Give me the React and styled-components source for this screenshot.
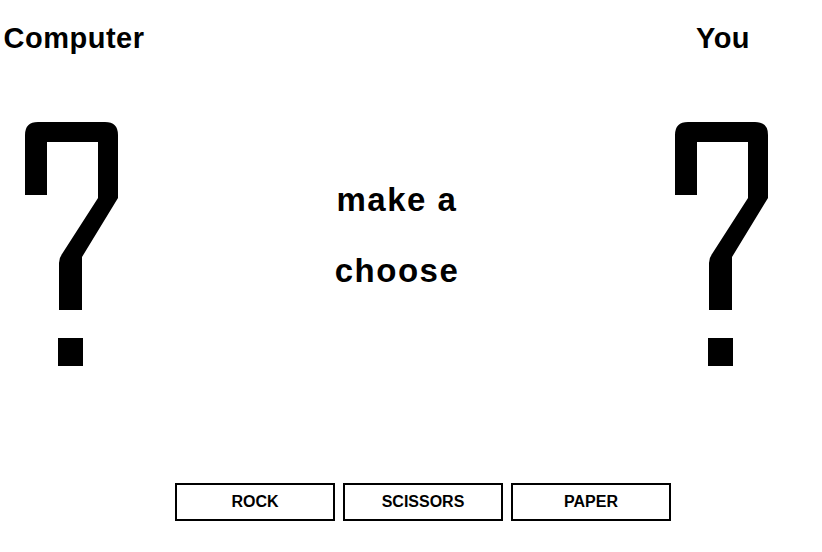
import React from 'react'
import styled, { createGlobalStyle } from 'styled-components'

const GlobalStyle = createGlobalStyle`
    body {
        margin: 0;
        background: #fff;
        color: #000;
        font-family: "Liberation Sans", Arial, sans-serif;
    }
`
const Page = styled.div`
    width: 822px;
    height: 552px;
    overflow: hidden;
`
const Board = styled.div`
    display: grid;
    grid-template-columns: 144px 506px 144px;
    align-items: start;
`
const Player = styled.div`
    display: flex;
    flex-direction: column;
    align-items: center;
    padding-top: 24px;
`
const Name = styled.h2`
    margin: 0;
    font-size: 29px;
    line-height: 28px;
    font-weight: 700;
    letter-spacing: 0.5px;
    transform: translateX(${({shift}) => shift || 0}px);
`
const Hand = styled.div`
    margin-top: 70px;
    width: 93px;
    height: 244px;
    transform: translateX(${({shift}) => shift || 0}px);
`
const Message = styled.p`
    margin: 164px 0 0;
    text-align: center;
    font-size: 33px;
    line-height: 71px;
    font-weight: 700;
    letter-spacing: 1.5px;
`
const ButtonRow = styled.div`
    display: flex;
    gap: 8px;
    margin-top: 117px;
    padding-left: 175px;
`
const Button = styled.button`
    width: 160px;
    height: 38px;
    padding: 0;
    background: #fff;
    border: 2px solid #000;
    border-radius: 0;
    font-family: "Liberation Sans", Arial, sans-serif;
    font-size: 16px;
    font-weight: 700;
    color: #000;
    cursor: pointer;
`

const QuestionMark = () => (
    <svg width="93" height="244" viewBox="0 0 93 244">
        <path d="M0 73 V13 Q0 0 13 0 H80 Q93 0 93 13 V76 L57 135 V188 H34 V141 Q34 136 37 132 L73 76 V20 H22 V73 Z" fill="#000" />
        <rect x="33" y="216" width="25" height="28" fill="#000" />
    </svg>
)

const choices = ['ROCK', 'SCISSORS', 'PAPER']

const App = () => {
    return (
        <>
        <GlobalStyle />
        <Page>
            <Board>
                <Player>
                    <Name shift={2}>Computer</Name>
                    <Hand shift={-1}><QuestionMark /></Hand>
                </Player>
                <Message>make a<br />choose</Message>
                <Player>
                    <Name shift={1}>You</Name>
                    <Hand shift={-1}><QuestionMark /></Hand>
                </Player>
            </Board>
            <ButtonRow>
                {choices.map((item) => <Button key={item}>{item}</Button>)}
            </ButtonRow>
        </Page>
        </>
    )
}

export default App
